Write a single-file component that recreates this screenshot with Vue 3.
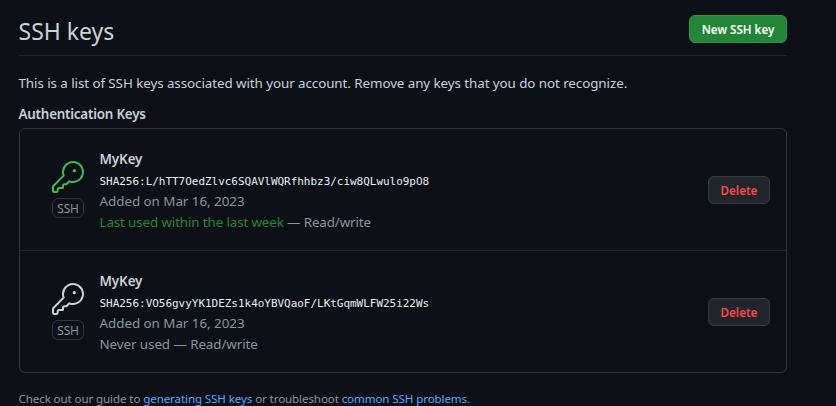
<script setup>
const keys = [
  { id: 1, name: 'MyKey', print: 'SHA256:L/hTT7OedZlvc6SQAVlWQRfhhbz3/ciw8QLwulo9pO8', added: 'Added on Mar 16, 2023', used: 'Last used within the last week', recent: true },
  { id: 2, name: 'MyKey', print: 'SHA256:VO56gvyYK1DEZs1k4oYBVQaoF/LKtGqmWLFW25i22Ws', added: 'Added on Mar 16, 2023', used: 'Never used', recent: false }
]
</script>

<template>
  <main class="page">
    <header class="head">
      <h2>SSH keys</h2>
      <button class="btn primary">New SSH key</button>
    </header>
    <p class="intro">This is a list of SSH keys associated with your account. Remove any keys that you do not recognize.</p>
    <h3 class="group">Authentication Keys</h3>
    <ul class="box">
      <li v-for="key in keys" :key="key.id" class="row">
        <div class="kind" :class="{ recent: key.recent }">
          <svg viewBox="0 0 24 24" width="32" height="32" fill="currentColor" aria-hidden="true">
            <path d="M16.75 8.5a1.25 1.25 0 1 0 0-2.5 1.25 1.25 0 0 0 0 2.5Z" />
            <path d="M15.75 0a8.25 8.25 0 1 1-2.541 16.101l-1.636 1.636a1.744 1.744 0 0 1-1.237.513H9.25a.25.25 0 0 0-.25.25v1.448a.876.876 0 0 1-.256.619l-.214.213a.75.75 0 0 1-.545.22H5.25a.25.25 0 0 0-.25.25v1A1.75 1.75 0 0 1 3.25 24h-1.5A1.75 1.75 0 0 1 0 22.25v-2.836c0-.464.185-.908.513-1.236l7.386-7.388A8.249 8.249 0 0 1 15.75 0ZM9 8.25a6.733 6.733 0 0 0 .463 2.462.75.75 0 0 1-.168.804l-7.722 7.721a.25.25 0 0 0-.073.177v2.836c0 .138.112.25.25.25h1.5a.25.25 0 0 0 .25-.25v-1c0-.966.784-1.75 1.75-1.75H7.5v-1c0-.966.784-1.75 1.75-1.75h1.086a.25.25 0 0 0 .177-.073l1.971-1.972a.75.75 0 0 1 .804-.168A6.75 6.75 0 1 0 9 8.25Z" />
          </svg>
          <span class="label">SSH</span>
        </div>
        <div class="info">
          <strong>{{ key.name }}</strong>
          <code>{{ key.print }}</code>
          <span class="muted">{{ key.added }}</span>
          <span class="muted usage"><span :class="{ fresh: key.recent }">{{ key.used }}</span> — Read/write</span>
        </div>
        <button class="btn danger">Delete</button>
      </li>
    </ul>
    <p class="foot">Check out our guide to <a>generating SSH keys</a> or troubleshoot <a>common SSH problems</a>.</p>
  </main>
</template>

<style>
body { background: #0d1117; overflow: hidden; }
</style>

<style scoped>
* { box-sizing: border-box; margin: 0; padding: 0; }
.page { width: 787px; height: 406px; padding: 0 0 0 19px; overflow: hidden; font-family: "Noto Sans", "Open Sans", sans-serif; font-size: 13.4px; line-height: 21px; color: #c9d1d9; white-space: nowrap; }
.head { display: flex; justify-content: space-between; align-items: flex-start; height: 56px; padding-top: 15px; border-bottom: 1px solid #21262d; }
h2 { margin-left: -0.5px; font-size: 23px; font-weight: 400; line-height: 32px; }
.btn { font-family: inherit; font-size: 11.6px; font-weight: 600; line-height: 20px; height: 28px; padding-top: 1px; border: 1px solid; border-radius: 6px; text-align: center; }
.primary { width: 98px; color: #fff; background: #238636; border-color: #388f48; }
.danger { width: 62px; margin-top: 47px; color: #fa4549; background: #21262d; border-color: #363b42; }
.intro { margin-top: 17px; margin-left: -0.5px; letter-spacing: -0.078px; }
.group { margin-top: 10px; margin-left: -0.5px; font-size: 13.4px; font-weight: 600; letter-spacing: -0.22px; }
.box { margin-top: 3px; height: 245px; list-style: none; border: 1px solid #30363d; border-radius: 6px; }
.row { display: flex; align-items: flex-start; height: 122px; padding: 0 16px 0 32px; }
.row:not(:last-child) { border-bottom: 1px solid #21262d; }
.kind { display: flex; flex-direction: column; align-items: center; width: 32px; margin-top: 32px; color: #c9d1d9; }
.kind svg { display: block; }
.recent { color: #3fb950; }
.label { width: 32px; height: 20px; margin-top: 5px; border: 1px solid #30363d; border-radius: 6px; color: #8b949e; font-size: 12px; line-height: 19px; letter-spacing: -0.2px; text-align: center; }
.info { display: flex; flex-direction: column; flex: 1; margin: 20px 0 0 15.5px; }
.info strong { font-weight: 600; letter-spacing: -0.1px; }
code { height: 21px; font-family: "DejaVu Sans Mono", monospace; font-size: 11px; line-height: 23px; letter-spacing: -0.03px; color: #e6edf3; }
.muted { color: #8b949e; letter-spacing: -0.04px; }
.usage { letter-spacing: -0.13px; }
.row:last-child .usage { letter-spacing: -0.08px; }
.fresh { color: #238636; }
.foot { margin-top: 17px; margin-left: -0.5px; font-size: 11.6px; line-height: 18px; letter-spacing: -0.115px; color: #8b949e; }
.foot a { color: #58a6ff; }
</style>
